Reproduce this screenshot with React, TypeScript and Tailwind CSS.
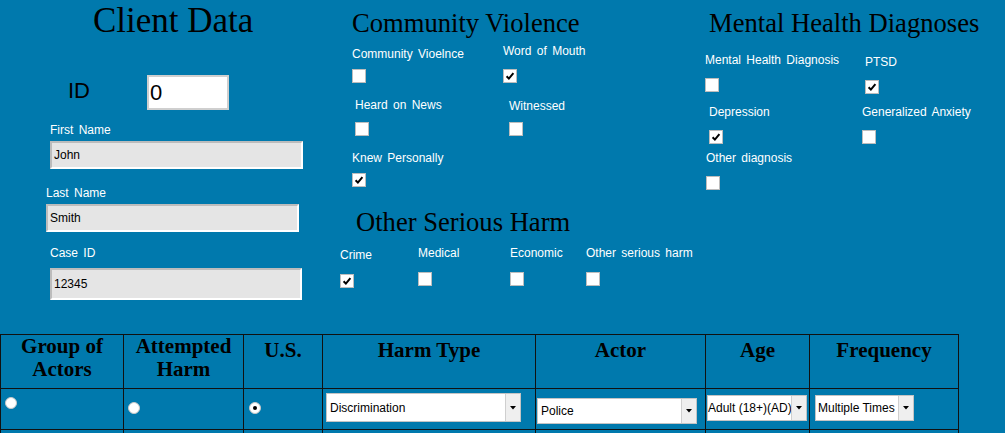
import React from "react";

function Box({ checked }: { checked?: boolean }) {
  return (
    <span className="block w-[14px] h-[14px] bg-white border border-[#bdbdbd]">
      {checked && (
        <svg width="12" height="12" viewBox="0 0 12 12" className="block">
          <path d="M2.6 6.2 L4.9 8.6 L9.4 3.2" fill="none" stroke="#000" strokeWidth="2" />
        </svg>
      )}
    </span>
  );
}

function Label({ children }: { children: React.ReactNode }) {
  return (
    <span className="block text-[12px] leading-[14px] text-white whitespace-nowrap [word-spacing:2px]">
      {children}
    </span>
  );
}

function Item({
  label,
  checked,
  wrap,
  gap,
}: {
  label: string;
  checked?: boolean;
  wrap: string;
  gap: string;
}) {
  return (
    <div className={wrap}>
      <Label>{label}</Label>
      <div className={gap}>
        <Box checked={checked} />
      </div>
    </div>
  );
}

function Field({
  label,
  value,
  labelCls,
  inputCls,
}: {
  label: string;
  value: string;
  labelCls: string;
  inputCls: string;
}) {
  return (
    <>
      <div className={labelCls}>
        <Label>{label}</Label>
      </div>
      <div
        className={
          "flex items-center bg-[#e5e5e5] border-2 border-t-[#bcbcbc] border-l-[#bcbcbc] border-b-white border-r-white pl-[2px] text-[12px] text-black " +
          inputCls
        }
      >
        {value}
      </div>
    </>
  );
}

function Radio({ on }: { on?: boolean }) {
  return (
    <span className="flex items-center justify-center w-[12px] h-[12px] rounded-full bg-white border border-[#c8c8c8]">
      {on && <span className="block w-[4px] h-[4px] rounded-full bg-black" />}
    </span>
  );
}

function Select({ value, cls, textCls }: { value: string; cls: string; textCls: string }) {
  return (
    <div className={"flex bg-white border border-[#c4c4c4] " + cls}>
      <span
        className={
          "flex-1 min-w-0 overflow-hidden whitespace-nowrap flex items-center text-[12px] text-black " + textCls
        }
      >
        {value}
      </span>
      <span className="w-[15px] shrink-0 flex items-center justify-center bg-[#efefef] border-l border-[#cfcfcf]">
        <svg width="6" height="4" viewBox="0 0 6 4">
          <path d="M0 0 H6 L3 3.5 Z" fill="#000" />
        </svg>
      </span>
    </div>
  );
}

const cell = "border-r border-b border-[#111]";
const th =
  "h-[54px] text-center text-black font-bold text-[21px] leading-[23px] font-['Liberation_Serif','Times_New_Roman',serif] " +
  cell;

export default function App() {
  return (
    <div className="w-[1005px] h-[433px] overflow-hidden bg-[#0079ad] font-['Liberation_Sans',Arial,sans-serif]">
      <div className="flex h-[334px]">
        {/* Client data */}
        <div className="w-[340px] shrink-0">
          <h1 className="pl-[93px] pt-[3px] text-[35px] leading-[35px] text-black font-normal font-['Liberation_Serif','Times_New_Roman',serif] whitespace-nowrap">
            Client Data
          </h1>
          <div className="mt-[37px] flex items-center h-[35px]">
            <span className="w-[147px] pl-[68px] text-[22px] leading-[31px] pb-[4px] text-black">ID</span>
            <div className="w-[82px] h-[35px] bg-white border-2 border-[#cfcfcf] pl-[1px] flex items-center text-[22px] text-black">
              0
            </div>
          </div>
          <Field
            label="First Name"
            value="John"
            labelCls="ml-[50px] mt-[12.5px]"
            inputCls="ml-[50px] mt-[4.5px] w-[253px] h-[28px]"
          />
          <Field
            label="Last Name"
            value="Smith"
            labelCls="ml-[46px] mt-[16.5px]"
            inputCls="ml-[46px] mt-[4.5px] w-[253px] h-[28px]"
          />
          <Field
            label="Case ID"
            value="12345"
            labelCls="ml-[50px] mt-[13.5px]"
            inputCls="ml-[50px] mt-[8.5px] w-[252px] h-[32px]"
          />
        </div>

        {/* Community violence + other serious harm */}
        <div className="w-[365px] shrink-0">
          <h2 className="pl-[12px] pt-[10px] text-[26.6px] leading-[26.6px] text-black font-normal font-['Liberation_Serif','Times_New_Roman',serif] whitespace-nowrap">
            Community Violence
          </h2>
          <div className="mt-[7px] flex">
            <Item label="Community Vioelnce" wrap="ml-[12px] w-[151px] pt-[3px]" gap="mt-[8.5px]" />
            <Item label="Word of Mouth" checked wrap="" gap="mt-[11.5px]" />
          </div>
          <div className="mt-[14.5px] flex">
            <Item label="Heard on News" wrap="ml-[15px] w-[154px]" gap="mt-[10.5px]" />
            <Item label="Witnessed" wrap="pt-[1.5px]" gap="mt-[9px]" />
          </div>
          <div className="mt-[14.5px] flex">
            <Item label="Knew Personally" checked wrap="ml-[12px]" gap="mt-[8.5px]" />
          </div>
          <h2 className="mt-[21.7px] pl-[16px] text-[26.6px] leading-[26.6px] text-black font-normal font-['Liberation_Serif','Times_New_Roman',serif] whitespace-nowrap">
            Other Serious Harm
          </h2>
          <div className="mt-[10.5px] flex">
            <Item label="Crime" checked wrap="w-[78px] pt-[2.5px]" gap="mt-[11.5px]" />
            <Item label="Medical" wrap="w-[92px]" gap="mt-[12px]" />
            <Item label="Economic" wrap="w-[76px]" gap="mt-[12px]" />
            <Item label="Other serious harm" wrap="" gap="mt-[12px]" />
          </div>
        </div>

        {/* Mental health */}
        <div className="flex-1">
          <h2 className="pl-[4px] pt-[9.5px] text-[26.6px] leading-[26.6px] text-black font-normal font-['Liberation_Serif','Times_New_Roman',serif] whitespace-nowrap">
            Mental Health Diagnoses
          </h2>
          <div className="mt-[17px] flex">
            <Item label="Mental Health Diagnosis" wrap="w-[160px]" gap="mt-[11px]" />
            <Item label="PTSD" checked wrap="pt-[2px]" gap="mt-[11px]" />
          </div>
          <div className="mt-[11px] flex">
            <Item label="Depression" checked wrap="ml-[4px] w-[153px]" gap="mt-[11px]" />
            <Item label="Generalized Anxiety" wrap="" gap="mt-[11px]" />
          </div>
          <div className="mt-[7px] flex">
            <Item label="Other diagnosis" wrap="ml-[1px]" gap="mt-[11px]" />
          </div>
        </div>
      </div>

      {/* Table */}
      <div className="w-[959px] border-l border-t border-[#111] grid grid-cols-[123px_120px_79px_213px_170px_104px_149px]">
        <div className={th}>
          Group of
          <br />
          Actors
        </div>
        <div className={th}>
          Attempted
          <br />
          Harm
        </div>
        <div className={th + " pt-[4px]"}>U.S.</div>
        <div className={th + " pt-[4px]"}>Harm Type</div>
        <div className={th + " pt-[4px]"}>Actor</div>
        <div className={th + " pt-[4px]"}>Age</div>
        <div className={th + " pt-[4px]"}>Frequency</div>

        <div className={"h-[41px] pl-[4px] pt-[8px] " + cell}>
          <Radio />
        </div>
        <div className={"h-[41px] pl-[4px] pt-[13px] " + cell}>
          <Radio />
        </div>
        <div className={"h-[41px] pl-[5px] pt-[13px] " + cell}>
          <Radio on />
        </div>
        <div className={"h-[41px] pl-[3px] pt-[4px] " + cell}>
          <Select value="Discrimination" cls="w-[195px] h-[29px]" textCls="pl-[3px]" />
        </div>
        <div className={"h-[41px] pl-[1px] pt-[9px] " + cell}>
          <Select value="Police" cls="w-[160px] h-[26px]" textCls="pl-[3px]" />
        </div>
        <div className={"h-[41px] pl-[1px] pt-[6px] " + cell}>
          <Select value="Adult (18+)(AD)" cls="w-[100px] h-[26px]" textCls="pl-0" />
        </div>
        <div className={"h-[41px] pl-[5px] pt-[6px] " + cell}>
          <Select value="Multiple Times" cls="w-[99px] h-[26px]" textCls="pl-[2px]" />
        </div>

        <div className={"h-[41px] " + cell} />
        <div className={"h-[41px] " + cell} />
        <div className={"h-[41px] " + cell} />
        <div className={"h-[41px] " + cell} />
        <div className={"h-[41px] " + cell} />
        <div className={"h-[41px] " + cell} />
        <div className={"h-[41px] " + cell} />
      </div>
    </div>
  );
}
